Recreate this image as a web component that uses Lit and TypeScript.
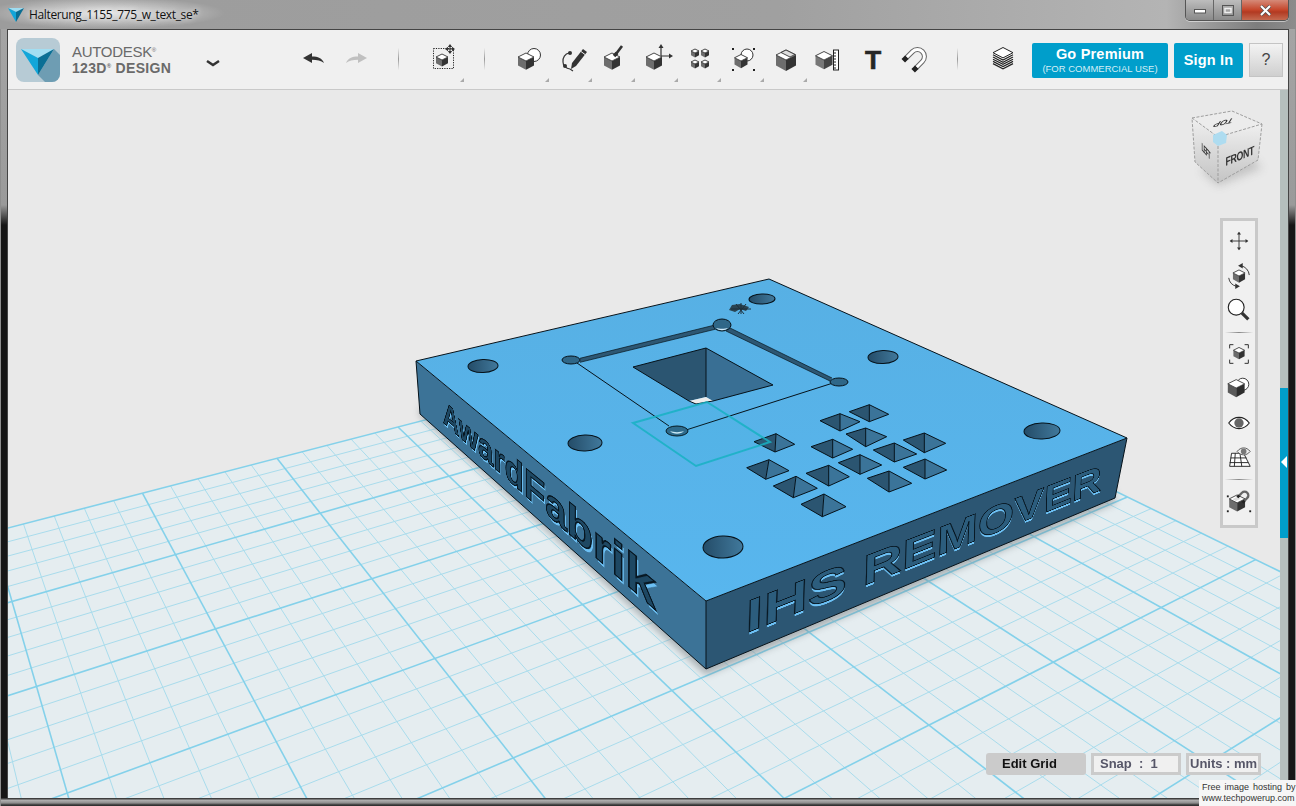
import { LitElement, html, css, svg } from 'lit';
import { customElement } from 'lit/decorators.js';

// ground plane homography, fitted to the major grid lines (page px)
const U = [2688, -166];
const V = [-206, -154];
const O = [398, 427];
const A = 0.0502;
const B = 0.078;
const P = (s: number, t: number) => {
  const d = 1 - s * A - t * B;
  return [(O[0] - s * A * U[0] - t * B * V[0]) / d, (O[1] - s * A * U[1] - t * B * V[1]) / d];
};
const pts = (a: number[][]) => a.map((p) => `${p[0].toFixed(1)},${p[1].toFixed(1)}`).join(' ');

const gridLines = () => {
  const minor: any[] = [];
  const major: any[] = [];
  for (let i = 0; i <= 60; i++) {
    const s = -4 + i / 5;
    const end = Math.min(14, (0.88 - A * s) / B);
    const [p, q] = [P(s, 0), P(s, end)];
    (i % 5 ? minor : major).push(svg`<line class=${i % 5 ? 'minor' : 'major'} x1=${p[0]} y1=${p[1]} x2=${q[0]} y2=${q[1]}></line>`);
  }
  for (let i = 0; i <= 70; i++) {
    const t = i / 5;
    const end = Math.min(8, (0.88 - B * t) / A);
    const [p, q] = [P(-4, t), P(end, t)];
    (i % 5 ? minor : major).push(svg`<line class=${i % 5 ? 'minor' : 'major'} x1=${p[0]} y1=${p[1]} x2=${q[0]} y2=${q[1]}></line>`);
  }
  return [...minor, ...major];
};

// small pyramid pits on the top face, left/top/right/bottom in px of a 3x crop at (700,390)
const PITS = [
  [448, 65, 508, 44, 566, 73, 508, 95],
  [360, 92, 420, 71, 480, 95, 420, 123],
  [438, 132, 497, 114, 560, 140, 497, 170],
  [610, 150, 673, 129, 737, 160, 673, 188],
  [162, 155, 228, 131, 284, 163, 225, 186],
  [333, 170, 398, 148, 458, 178, 398, 204],
  [520, 180, 583, 159, 650, 192, 583, 216],
  [415, 218, 480, 194, 545, 225, 480, 253],
  [610, 232, 675, 207, 740, 240, 675, 267],
  [140, 233, 207, 209, 267, 242, 197, 268],
  [318, 250, 386, 226, 448, 260, 386, 288],
  [502, 265, 567, 243, 635, 280, 567, 306],
  [220, 288, 288, 259, 352, 295, 280, 323],
  [303, 343, 372, 312, 438, 350, 367, 380],
].map((p) => p.map((v, i) => (i % 2 ? 390 + v / 3 : 700 + v / 3)));

const HOLES = [
  [483, 366, 15, 6.5],
  [762, 299, 13, 5],
  [883, 357, 15, 6.5],
  [585, 443, 17, 8],
  [1042, 431, 18, 8],
  [723, 547, 20, 11],
];

// rect (0,0,w,h) onto a quad TL,TR,BR,BL, for the engraved side text
const quad = (w: number, h: number, q: number[][], ox: number, oy: number) => {
  const [[x0, y0], [x1, y1], [x2, y2], [x3, y3]] = q.map((p) => [p[0] - ox, p[1] - oy]);
  const dx1 = x1 - x2, dx2 = x3 - x2, dx3 = x0 - x1 + x2 - x3;
  const dy1 = y1 - y2, dy2 = y3 - y2, dy3 = y0 - y1 + y2 - y3;
  const den = dx1 * dy2 - dx2 * dy1;
  const g = (dx3 * dy2 - dx2 * dy3) / den;
  const k = (dx1 * dy3 - dx3 * dy1) / den;
  const a = x1 - x0 + g * x1, b = x3 - x0 + k * x3;
  const d = y1 - y0 + g * y1, e = y3 - y0 + k * y3;
  return `transform:matrix3d(${a / w},${d / w},0,${g / w},${b / h},${e / h},0,${k / h},0,0,1,0,${x0},${y0},0,1)`;
};

// icon cube, r is half the width
const cube = (x: number, y: number, r: number, l = '#6d6d6d', d = '#333') => {
  const h = r * 0.5, v = r * 1.05;
  return svg`
    <path fill=${l} d="M${x - r} ${y - h}L${x} ${y}V${y + v + h * 0.1}L${x - r} ${y + v - h}Z"></path>
    <path fill=${d} d="M${x + r} ${y - h}L${x} ${y}V${y + v + h * 0.1}L${x + r} ${y + v - h}Z"></path>
    <path fill="#fff" stroke="#333" stroke-width=".9" d="M${x} ${y - 2 * h}L${x + r} ${y - h}L${x} ${y}L${x - r} ${y - h}Z"></path>`;
};

const dots = (c: number[][]) => c.map((p) => svg`<rect x=${p[0] - 1} y=${p[1] - 1} width="2" height="2" fill="#222"></rect>`);

const arrowCross = (x: number, y: number, r: number) => svg`
  <path stroke="#333" stroke-width="1" fill="none" d="M${x - r} ${y}H${x + r}M${x} ${y - r}V${y + r}"></path>
  <path fill="#333" d="M${x - r - 1} ${y}l3 -2.2v4.4zM${x + r + 1} ${y}l-3 -2.2v4.4zM${x} ${y - r - 1}l-2.2 3h4.4zM${x} ${y + r + 1}l-2.2 -3h4.4z"></path>`;

const TOOLS = [
  svg`<circle cx="20" cy="10" r="6.5" fill="#fff" stroke="#333" stroke-width="1"></circle>${cube(12, 16, 8)}`,
  svg`<path d="M12 8a7 8 0 0 0-6 9 8 7 0 0 0 7 7l3 2" fill="none" stroke="#333" stroke-width="1.2"></path>
      <circle cx="13" cy="8" r="2" fill="#333"></circle><circle cx="8" cy="21" r="2" fill="#333"></circle>
      <path d="M26 4l4 3-11 14-5 3 1-6z" fill="#333"></path><path d="M24 6.500l4 3" stroke="#eee" stroke-width="1"></path>`,
  svg`${cube(12, 16, 8)}<path d="M16 9l6-8" stroke="#333" stroke-width="2.600"></path><path d="M14 11l3-3" stroke="#333" stroke-width="3.500"></path>`,
  svg`${cube(11, 16, 8)}<path d="M18 11V1M18 11h9" stroke="#333" stroke-width="1.200" fill="none"></path>
      <path d="M18 -1l-2.500 4h5zM30 11l-4-2.500v5z" fill="#333"></path>`,
  svg`${cube(9, 8, 4)}${cube(19, 8, 4)}${cube(9, 19, 4)}${cube(19, 19, 4)}`,
  svg`<circle cx="18" cy="10" r="6" fill="#fff" stroke="#333" stroke-width="1"></circle>${cube(12, 16, 6.500)}
      ${dots([[4, 4], [25, 4], [4, 25], [25, 25]])}`,
  svg`${cube(14, 15, 10)}<path d="M14 5l9 4.500-5 2.500-9-4.500z" fill="#ddd" stroke="#333" stroke-width=".9"></path>`,
  svg`${cube(9, 15, 8.500, '#777', '#444')}<rect x="18.500" y="5" width="5" height="20" fill="#fff" stroke="#222" stroke-width="1"></rect>
      <path d="M19 8h2M19 11h2M19 14h2M19 17h2M19 20h2M19 23h2" stroke="#222" stroke-width="1"></path>`,
  svg`<text class="t-glyph" x="15" y="24" text-anchor="middle">T</text>`,
  svg`<g transform="rotate(45 15 13)"><path d="M8 20V11a7 7 0 0 1 14 0v9" fill="none" stroke="#666" stroke-width="5"></path>
      <path d="M8 19V11a7 7 0 0 1 14 0v8" fill="none" stroke="#fff" stroke-width="3"></path>
      <path d="M5.500 19h5v5h-5zM19.500 19h5v5h-5z" fill="#222"></path></g>`,
];

const MOVE_ICON = svg`<rect x="4.500" y="3.500" width="20" height="20" fill="none" stroke="#222" stroke-dasharray="1.200 1.200"></rect>
  ${cube(13, 15, 6)}${arrowCross(21, 4, 4)}`;

const LAYERS_ICON = svg`<g transform="translate(1 -3)">
  <path d="M5 11l10 5 10-5v10l-10 6-10-6z" fill="#fff"></path>
  <path d="M5 12.800l10 5.200 10-5.200M5 15l10 5.200L25 15M5 17.200l10 5.200 10-5.200M5 19.400l10 5.200 10-5.200M5 21.600l10 5.200 10-5.200" fill="none" stroke="#222" stroke-width="1.200"></path>
  <path d="M15 5.500l10 5.200-10 5.200-10-5.200z" fill="#fff" stroke="#222"></path></g>`;

const NAV_TOP = [
  arrowCross(15, 15, 9),
  svg`${cube(15, 15, 6.500)}<path d="M17 4a11 11 0 0 1 9 10M4 17a11 11 0 0 0 8 9" fill="none" stroke="#333"></path>
      <path d="M14 4l5-3v6zM16 26l-5 3v-6z" fill="#333"></path>`,
  svg`<circle cx="12" cy="12" r="8.500" fill="#fff" stroke="#222" stroke-width="1.200"></circle><path d="M18 18l7 7" stroke="#333" stroke-width="3.500"></path>`,
];
const NAV_MID = [
  svg`<path d="M9 5H5v4M21 5h4v4M9 25H5v-4M21 25h4v-4" fill="none" stroke="#222"></path>${cube(15, 14, 6)}`,
  svg`<circle cx="19" cy="11" r="6.500" fill="#fff" stroke="#333"></circle>${cube(12, 15, 9, '#5a5a5a', '#2d2d2d')}`,
  svg`<path d="M4 15c6-8 16-8 22 0-6 8-16 8-22 0z" fill="#fff" stroke="#222" stroke-width="1.200"></path><circle cx="15" cy="15" r="5" fill="#666"></circle>`,
  svg`<path d="M7 11h13l7 14H5z" fill="#fff" stroke="#222"></path><path d="M6 16h17M5 21h20M11 11l-1 14M16 11l2 14" stroke="#222" fill="none"></path>
      <path d="M13 9c4-5 10-5 14 0-4 5-10 5-14 0z" fill="#eee" stroke="#555"></path><circle cx="20" cy="9" r="3" fill="#777"></circle>`,
];
const NAV_SNAP = svg`${cube(13, 17, 8.500)}<path d="M8 13l5-2.500 4 2-5 2.500z" fill="#ddd"></path>
  <g transform="rotate(45 21 9)"><path d="M17 14V9a4 4 0 0 1 8 0v5" fill="none" stroke="#666" stroke-width="2.500"></path><path d="M15.500 13h3v3h-3zM23.500 13h3v3h-3z" fill="#222"></path></g>
  ${dots([[3, 10], [3, 26], [27, 26]])}`;

@customElement('app-root')
export class AppRoot extends LitElement {
  static styles = css`
    :host {
      display: block;
      width: 1296px;
      height: 806px;
      overflow: hidden;
      position: relative;
      font-family: 'Liberation Sans', Arial, sans-serif;
    }
    .window {
      height: 806px;
      display: flex;
      flex-direction: column;
      background: linear-gradient(180deg, #a6a6a6 0, #9a9a9a 205px, #161616 225px);
      box-shadow: inset 1px 0 #8e8e8e, inset -1px 0 #8e8e8e, inset 0 1px #555;
      border-radius: 6px 6px 0 0;
    }
    .titlebar {
      height: 29px;
      flex: none;
      display: flex;
      align-items: flex-start;
      background:
        radial-gradient(120px 16px at 105px 13px, rgba(255, 255, 255, 0.75), rgba(255, 255, 255, 0) 100%),
        linear-gradient(90deg, #9c9c9c 0, #a0a0a0 60%, #b4b4b4 90%, #7d7d7d 97%, #8c8c8c 100%);
    }
    .title-icon {
      width: 16px;
      height: 14px;
      margin: 8px 0 0 8px;
    }
    .title {
      margin: 7px 0 0 5px;
      font: 12px/16px 'Open Sans', sans-serif;
      letter-spacing: -0.36px;
      color: #111;
      text-shadow: 0 0 6px #fff;
    }
    .caption {
      margin-left: auto;
      margin-right: 7px;
      display: flex;
      height: 20px;
      border: 1px solid #555;
      border-top: none;
      border-radius: 0 0 5px 5px;
      overflow: hidden;
      box-shadow: 0 1px 0 rgba(255, 255, 255, 0.5);
    }
    .cap {
      width: 27px;
      display: flex;
      align-items: center;
      justify-content: center;
      background: linear-gradient(180deg, #bdbdbd, #a2a2a2 50%, #8a8a8a);
      border-right: 1px solid #666;
    }
    .cap.close {
      width: 46px;
      border-right: none;
      background: linear-gradient(180deg, #d58a78, #c5452a 50%, #b23a22 60%, #c46a50);
    }
    .frame {
      flex: 1;
      margin: 0 7px 0 7px;
      display: flex;
      flex-direction: column;
      border: 1px solid #444;
      border-bottom: none;
      min-height: 0;
    }
    .toolbar {
      flex: none;
      display: flex;
      align-items: center;
      padding-top: 1px;
      box-sizing: border-box;
      background: #f0f0f0;
      border-bottom: 1px solid #c9c9c9;
      height: 60px;
    }
    .logo {
      width: 44px;
      height: 44px;
      margin-left: 8px;
      flex: none;
    }
    .brand {
      width: 120px;
      margin-left: 12px;
      flex: none;
      color: #6a6a6a;
      font-family: 'Liberation Sans', Arial, sans-serif;
    }
    .brand-a {
      font-size: 15px;
      line-height: 16px;
      letter-spacing: -0.3px;
    }
    .brand-b {
      font-size: 14px;
      line-height: 16px;
      font-weight: 700;
      letter-spacing: 0.3px;
    }
    .brand sup {
      font-size: 6px;
      line-height: 0;
      vertical-align: 5px;
    }
    .chev {
      width: 20px;
      height: 14px;
      margin-left: 11px;
      margin-top: 8px;
      flex: none;
    }
    .hist {
      width: 42px;
      height: 24px;
      flex: none;
      display: flex;
      justify-content: center;
      margin-top: -5px;
    }
    .hist.first {
      margin-left: 70px;
    }
    .sep {
      width: 1px;
      height: 22px;
      flex: none;
      background: linear-gradient(180deg, #eee, #999 50%, #eee);
      margin-top: -2px;
    }
    .tool {
      width: 43px;
      height: 44px;
      flex: none;
      display: flex;
      align-items: center;
      justify-content: center;
      position: relative;
    }
    .tool svg {
      width: 30px;
      height: 30px;
      overflow: visible;
    }
    .tool.more::after {
      content: '';
      position: absolute;
      right: 1px;
      bottom: 0;
      border-left: 4px solid transparent;
      border-bottom: 4px solid #aaa;
    }
    .t-glyph {
      font: 700 26.5px 'Liberation Sans', sans-serif;
      fill: #262626;
      stroke: #262626;
      stroke-width: 0.6;
    }
    .btn {
      height: 35px;
      flex: none;
      box-sizing: border-box;
      background: #009ecb;
      color: #fff;
      border-radius: 2px;
      display: flex;
      flex-direction: column;
      align-items: center;
      justify-content: center;
    }
    .premium {
      width: 136px;
      margin-left: 9px;
    }
    .premium b {
      font-size: 14.5px;
      line-height: 17px;
      letter-spacing: 0.2px;
    }
    .premium span {
      font-size: 9.5px;
      line-height: 11px;
      color: #d5eef6;
    }
    .signin {
      width: 69px;
      margin-left: 6px;
      font-size: 14.5px;
      font-weight: 700;
      letter-spacing: 0.2px;
    }
    .help {
      width: 34px;
      height: 34px;
      margin-left: 6px;
      flex: none;
      box-sizing: border-box;
      border: 1px solid #c4c4c4;
      background: linear-gradient(180deg, #f3f3f3, #cfcfcf);
      color: #444;
      font-size: 16px;
      display: flex;
      align-items: center;
      justify-content: center;
    }
    .work {
      flex: 1;
      display: flex;
      min-height: 0;
    }
    .viewport {
      flex: 1;
      position: relative;
      overflow: hidden;
      background: #e9e9e9;
    }
    .scene {
      position: absolute;
      inset: 0;
      width: 1272px;
      height: 708px;
    }
    .floor {
      fill: #e5edf0;
    }
    .major {
      stroke: #84d1ea;
      stroke-width: 1.600;
    }
    .minor {
      stroke: #a9dcec;
      stroke-width: 1;
    }
    .ink {
      stroke: #06121a;
      stroke-width: 1;
      stroke-linejoin: round;
      fill: none;
    }
    .ink.thin {
      stroke-width: 0.7;
    }
    .engrave {
      position: absolute;
      left: 0;
      top: 0;
      transform-origin: 0 0;
      font: 700 100px/72px 'Liberation Sans', sans-serif;
      white-space: nowrap;
      -webkit-text-stroke: 2px #071722;
    }
    .engrave.front {
      width: 690px;
      height: 72px;
      color: #2c5d7d;
      text-shadow: 0 6px 0 #6cc0f4;
    }
    .engrave.side {
      width: 606px;
      height: 72px;
      color: #1e4863;
      text-shadow: 4px 5px 0 #6cc0f4;
      -webkit-text-stroke-width: 3px;
    }
    .cube-text {
      font: 700 11px 'Liberation Sans', sans-serif;
      fill: #333;
    }
    .nav {
      position: absolute;
      left: 1212px;
      top: 128px;
      width: 38px;
      height: 310px;
      box-sizing: border-box;
      border: 3px solid #c9c9c9;
      background: #f0f0f0;
      display: flex;
      flex-direction: column;
      align-items: center;
      padding-top: 3px;
    }
    .nav-item {
      width: 30px;
      height: 34.500px;
      flex: none;
      display: flex;
      align-items: center;
      justify-content: center;
    }
    .nav-item svg {
      width: 28px;
      height: 28px;
      overflow: visible;
    }
    .nav-sep {
      width: 28px;
      height: 1px;
      flex: none;
      margin: 4px 0 4px;
      background: linear-gradient(90deg, #eee, #888 50%, #eee);
    }
    .status {
      position: absolute;
      left: 978px;
      top: 663px;
      display: flex;
      gap: 5px;
      font-size: 13px;
      font-weight: 700;
    }
    .edit-grid {
      width: 100px;
      height: 22px;
      box-sizing: border-box;
      padding-left: 16px;
      line-height: 22px;
      background: #cbcbcb;
      border-radius: 3px;
      color: #111;
    }
    .box {
      height: 22px;
      box-sizing: border-box;
      border: 3px solid #cbcbcb;
      background: #f0f0f0;
      color: #565668;
      line-height: 16px;
      white-space: pre;
    }
    .snap {
      width: 90px;
      padding-left: 6px;
    }
    .units {
      width: 75px;
      padding-left: 1px;
    }
    .strip {
      width: 8px;
      flex: none;
      background: #b5bfbd;
      position: relative;
    }
    .strip-blue {
      position: absolute;
      left: 0;
      right: 0;
      top: 298px;
      height: 150px;
      background: #009ecb;
    }
    .strip-blue::after {
      content: '';
      position: absolute;
      left: 1px;
      top: 68px;
      border-right: 6px solid #fff;
      border-top: 6px solid transparent;
      border-bottom: 6px solid transparent;
    }
    .bottom {
      height: 8px;
      flex: none;
      margin: 0 1px;
      background: linear-gradient(180deg, #3e3e3e 0, #3e3e3e 1px, #b3b3b3 2px, #8d8d8d 5px, #333 7px);
    }
    .mark {
      position: absolute;
      left: 1199px;
      top: 780px;
      width: 97px;
      height: 26px;
      box-sizing: border-box;
      padding: 2px 0 0 3px;
      background: #f6f6f6;
      font-size: 9px;
      line-height: 11px;
      color: #333;
      white-space: nowrap;
    }
    .mark span {
      word-spacing: 1.500px;
    }
  `;

  private renderScene() {
    const pitFaces = PITS.map((p) => {
      const [lx, ly, tx, ty, rx, ry, bx, by] = p;
      return svg`
        <polygon fill="#2b5571" points=${pts([[lx, ly], [tx, ty], [bx, by]])}></polygon>
        <polygon fill="#3b7499" points=${pts([[tx, ty], [rx, ry], [bx, by]])}></polygon>
        <polygon class="ink" points=${pts([[lx, ly], [tx, ty], [rx, ry], [bx, by]])}></polygon>
        <line class="ink" x1=${tx} y1=${ty} x2=${bx} y2=${by}></line>`;
    });
    return svg`
      <svg class="scene" viewBox="8 90 1272 708" xmlns="http://www.w3.org/2000/svg">
        <defs>
          <linearGradient id="hole" x1="0" x2="1" y1="0" y2="0">
            <stop offset="0" stop-color="#244c68"></stop>
            <stop offset="1" stop-color="#41799c"></stop>
          </linearGradient>
          <linearGradient id="top" x1="0" x2="0" y1="0" y2="1">
            <stop offset="0" stop-color="#57b0e4"></stop>
            <stop offset="1" stop-color="#58b6ee"></stop>
          </linearGradient>
          <filter id="soft" x="-10%" y="-10%" width="120%" height="120%"><feGaussianBlur stdDeviation="3.500"></feGaussianBlur></filter>
        </defs>
        <polygon class="floor" points=${pts([P(-4, 0), P(-4, 6), [1420, 900], [-200, 900], P(4, 0)])}></polygon>
        ${gridLines()}
        <polygon fill="#6d7478" opacity=".5" filter="url(#soft)" points="420,416 706,675 1115,503 1115,490 706,660 420,405"></polygon>

        <polygon fill="#3c7397" points="416,361 706,601 706,669 420,414"></polygon>
        <polygon fill="#2c5673" points="706,601 1127,438 1115,498 706,669"></polygon>
        <polygon fill="url(#top)" points="769,279 1127,438 706,601 416,361"></polygon>
        <path class="ink" d="M416 361L769 279L1127 438L706 601L416 361L420 414L706 669L1115 498L1127 438M706 601V669"></path>

        ${HOLES.map(([x, y, rx, ry]) => svg`<ellipse class="ink" cx=${x} cy=${y} rx=${rx} ry=${ry} style="fill:url(#hole)" transform="rotate(-2 ${x} ${y})"></ellipse>`)}

        <path d="M732 305l8 -1 9 3 -3 4 -6 -2 -5 3 -6 -2z" fill="#2a4452"></path>
        <path d="M731 309l20 0M736 304l8 10M746 304l-8 10M741 303v11" stroke="#1d2f3a" stroke-width="1"></path>

        <polygon fill="#2d5773" points="580,358.300 715,325 715,329.300 580,362.300"></polygon>
        <polygon fill="#2d5773" points="728,327 832,378 830,381 726,331"></polygon>
        <path class="ink thin" d="M580 358.300L715 325M580 362.300L715 329.300M728 327L832 378M726 331L830 381"></path>
        <path class="ink" d="M577 363L669 426M686 430L833 383"></path>
        <ellipse class="ink" cx="571" cy="360" rx="9" ry="4" style="fill:#2f6788"></ellipse>
        <ellipse class="ink" cx="722" cy="325" rx="9" ry="6" style="fill:#2f6788"></ellipse>
        <ellipse class="ink" cx="839" cy="382" rx="9" ry="4" style="fill:#2f6788"></ellipse>
        <ellipse class="ink" cx="677" cy="431" rx="11" ry="5" style="fill:#2f6788"></ellipse>
        <path d="M670 431c3 3.500 11 3.500 14 0-4 1.500-10 1.500-14 0z" fill="#d3ecfa"></path>
        <path d="M716 328c3 3 9 3 12 0-3 1-9 1-12 0z" fill="#d3ecfa"></path>

        <polygon fill="#2b5571" points="706,348 633,367 689,401 706,397"></polygon>
        <polygon fill="#396f94" points="706,348 773,385 713,401 706,397"></polygon>
        <polygon fill="#ececec" points="689,401 706,397 713,401 696,404"></polygon>
        <path class="ink" d="M706 348L633 367L689 401L696 404L713 401L773 385L706 348V397"></path>

        ${pitFaces}

        <polygon points="633,423 707,402 770,442 696,466" fill="#1fb4c6" fill-opacity=".06" stroke="#17b2c3" stroke-opacity=".85" stroke-width="2"></polygon>
      </svg>`;
  }

  private renderViewCube() {
    return svg`
      <svg class="scene" viewBox="8 90 1272 708" xmlns="http://www.w3.org/2000/svg">
        <defs>
          <linearGradient id="cubeL" x1="0" x2="0" y1="0" y2="1">
            <stop offset="0" stop-color="#efefef"></stop><stop offset="1" stop-color="#c4c4c4"></stop>
          </linearGradient>
          <filter id="cubeShadow" x="-30%" y="-30%" width="160%" height="160%"><feGaussianBlur stdDeviation="4"></feGaussianBlur></filter>
        </defs>
        <polygon fill="#999" opacity=".45" filter="url(#cubeShadow)" points="1200,170 1218,186 1262,168 1250,156"></polygon>
        <polygon fill="#ececec" points="1192,118 1232,111 1262,124 1218,137"></polygon>
        <polygon fill="url(#cubeL)" points="1192,118 1218,137 1218,183 1195,162"></polygon>
        <polygon fill="url(#cubeL)" points="1218,137 1262,124 1258,160 1218,183"></polygon>
        <path d="M1192 118L1232 111L1262 124L1218 137L1192 118L1195 162L1218 183L1258 160L1262 124M1218 137V183" fill="none" stroke="#9d9d9d" stroke-dasharray="3 1.500"></path>
        <polygon fill="#aedcf0" points="1213,135 1222,131 1227,135 1226,143 1218,146 1213,142"></polygon>
        <text class="cube-text" text-anchor="middle" transform="matrix(-.85 .2 .45 -.7 1225 120)">TOP</text>
        <text class="cube-text" text-anchor="middle" transform="matrix(.42 .46 0 1 1206 155)" textLength="22">LEFT</text>
        <text class="cube-text" text-anchor="middle" transform="matrix(.8 -.34 0 1.100 1240 160)" textLength="36">FRONT</text>
      </svg>`;
  }

  render() {
    const ox = 8, oy = 90;
    return html`
      <div class="window">
        <div class="titlebar">
          <svg class="title-icon" viewBox="0 0 16 14">
            <path d="M0 0h16L8 4z" fill="#9fdcf0"></path>
            <path d="M0 0l8 4v10z" fill="#12a5d8"></path>
            <path d="M16 0L8 4v10z" fill="#0a6d92"></path>
          </svg>
          <div class="title">Halterung_1155_775_w_text_se*</div>
          <div class="caption">
            <div class="cap">
              <svg width="12" height="8" viewBox="0 0 12 8"><rect x="0.500" y="3.500" width="11" height="3.500" fill="#fff" stroke="#555"></rect></svg>
            </div>
            <div class="cap">
              <svg width="12" height="11" viewBox="0 0 12 11"><rect x="0.500" y="0.500" width="11" height="10" fill="none" stroke="#555"></rect><rect x="3" y="3.500" width="6" height="4" fill="none" stroke="#eee" stroke-width="1.500"></rect></svg>
            </div>
            <div class="cap close">
              <svg width="13" height="11" viewBox="0 0 13 11"><path d="M2 1l9 9M11 1l-9 9" stroke="#555" stroke-width="3.500"></path><path d="M2 1l9 9M11 1l-9 9" stroke="#fff" stroke-width="2"></path></svg>
            </div>
          </div>
        </div>
        <div class="frame">
          <div class="toolbar">
            <svg class="logo" viewBox="0 0 44 44">
              <rect width="44" height="44" rx="8" fill="#b7cbd5"></rect>
              <path d="M22 37L38 11l6 6v19a8 8 0 0 1-8 8H29z" fill="#6e9db3"></path>
              <path d="M5 11h33l-16 9z" fill="#a2def2"></path>
              <path d="M5 11l17 9v17z" fill="#12a6d9"></path>
              <path d="M38 11L22 20v17z" fill="#0a6f95"></path>
            </svg>
            <div class="brand">
              <div class="brand-a">AUTODESK<sup>®</sup></div>
              <div class="brand-b">123D<sup>®</sup> DESIGN</div>
            </div>
            <svg class="chev" viewBox="0 0 20 14"><path d="M4 4l6 4 6-4" fill="none" stroke="#333" stroke-width="2.500"></path></svg>
            <div class="hist first">
              <svg width="24" height="24" viewBox="0 0 24 24"><path d="M1 12l9-5v3.500c6 0 10 1.500 12 6.500-3-2.500-7-3.200-12-3.200V17z" fill="#333"></path></svg>
            </div>
            <div class="hist">
              <svg width="24" height="24" viewBox="0 0 24 24"><path d="M23 12l-9-5v3.500c-6 0-10 1.500-12 6.500 3-2.500 7-3.200 12-3.200V17z" fill="#c0c0c0"></path></svg>
            </div>
            <div class="sep" style="margin-left:21px"></div>
            <div class="tool more" style="margin-left:23px"><svg viewBox="0 0 30 30">${MOVE_ICON}</svg></div>
            <div class="sep" style="margin-left:19px"></div>
            <div style="display:flex;margin-left:22px">
              ${TOOLS.map((icon, i) => html`<div class="tool ${i < 7 ? 'more' : ''}"><svg viewBox="0 0 30 30">${icon}</svg></div>`)}
            </div>
            <div class="sep" style="margin-left:20px"></div>
            <div class="tool" style="margin-left:22px"><svg viewBox="0 0 30 30">${LAYERS_ICON}</svg></div>
            <div class="btn premium"><b>Go Premium</b><span>(FOR COMMERCIAL USE)</span></div>
            <div class="btn signin">Sign In</div>
            <div class="help">?</div>
          </div>
          <div class="work">
            <div class="viewport">
              ${this.renderScene()}
              <div class="engrave side" style=${quad(606, 72, [[443, 400], [657, 574], [657, 612], [443, 423]], ox, oy)}>AwardFabrik</div>
              <div class="engrave front" style=${quad(690, 72, [[746, 601], [1098, 466], [1097, 492], [745, 634]], ox, oy)}>IHS REMOVER</div>
              ${this.renderViewCube()}
              <div class="nav">
                ${NAV_TOP.map((i) => html`<div class="nav-item"><svg viewBox="0 0 30 30">${i}</svg></div>`)}
                <div class="nav-sep"></div>
                ${NAV_MID.map((i) => html`<div class="nav-item"><svg viewBox="0 0 30 30">${i}</svg></div>`)}
                <div class="nav-sep"></div>
                <div class="nav-item"><svg viewBox="0 0 30 30">${NAV_SNAP}</svg></div>
              </div>
              <div class="status">
                <div class="edit-grid">Edit Grid</div>
                <div class="box snap">Snap  :  1</div>
                <div class="box units">Units : mm</div>
              </div>
            </div>
            <div class="strip"><div class="strip-blue"></div></div>
          </div>
        </div>
        <div class="bottom"></div>
      </div>
      <div class="mark"><span>Free image hosting by</span><br />www.techpowerup.com</div>
    `;
  }
}
